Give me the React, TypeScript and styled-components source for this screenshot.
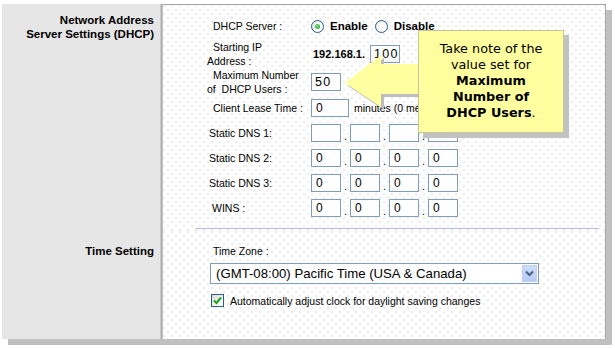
import React from "react";
import styled, { createGlobalStyle } from "styled-components";

const Global = createGlobalStyle`
  html, body { margin: 0; padding: 0; background: #ffffff; }
  body { font-family: "Liberation Sans", Arial, sans-serif; color: #000; }
  * { box-sizing: border-box; }
`;

const Page = styled.div`
  position: relative;
  width: 615px;
  height: 348px;
  padding: 4px 0 0 2px;
  overflow: hidden;
`;

const Frame = styled.div`
  width: 604px;
  display: flex;
  flex-direction: column;
  box-shadow: 6px 6px 0 #c0c0c0;
`;

const Section = styled.section<{ $h: number }>`
  display: flex;
  height: ${(p) => p.$h}px;
`;

const SideCell = styled.div<{ $pt: number }>`
  width: 158px;
  flex: none;
  background: #e6e6e6;
  text-align: right;
  padding: ${(p) => p.$pt}px 6px 0 0;
  font-weight: bold;
  font-size: 11.5px;
  line-height: 14px;
`;

const Divider = styled.div`
  width: 3px;
  flex: none;
  background: linear-gradient(to right, #d4d4d4, #a9a9a9 60%, #cfcfcf);
`;

const Body = styled.div<{ $top?: boolean; $pt: number; $pl: number }>`
  flex: 1;
  position: relative;
  display: flex;
  flex-direction: column;
  padding: ${(p) => p.$pt}px 0 0 ${(p) => p.$pl}px;
  border-right: 1px solid #a8a8a8;
  border-top: ${(p) => (p.$top ? "1px solid #a4a4a4" : "none")};
  background-color: #ffffff;
  background-image: radial-gradient(circle at 1px 1px, #ececec 0.7px, transparent 1.1px),
    radial-gradient(circle at 1px 1px, #ececec 0.7px, transparent 1.1px);
  background-size: 8px 8px, 8px 8px;
  background-position: 0 0, 4px 4px;
  font-size: 10.5px;
`;

const Row = styled.div<{ $h: number; $mt?: number }>`
  display: flex;
  align-items: center;
  height: ${(p) => p.$h}px;
  margin-top: ${(p) => p.$mt ?? 0}px;
  flex: none;
`;

const Label = styled.div`
  width: 104px;
  flex: none;
  line-height: 14px;
`;

const LabelLine = styled.span<{ $indent?: number }>`
  display: block;
  padding-left: ${(p) => p.$indent ?? 0}px;
  white-space: pre;
`;

const Controls = styled.div`
  display: flex;
  align-items: center;
  white-space: nowrap;
`;

const Radio = styled.span<{ $on?: boolean }>`
  width: 13px;
  height: 13px;
  border-radius: 50%;
  border: 1px solid #2b5d8b;
  background: radial-gradient(circle at 60% 60%, #ffffff 30%, #dcdcd4 100%);
  display: inline-flex;
  align-items: center;
  justify-content: center;
  &::after {
    content: "";
    width: 5px;
    height: 5px;
    border-radius: 50%;
    background: ${(p) => (p.$on ? "radial-gradient(circle at 40% 40%, #6ee27a, #1f9e2c)" : "transparent")};
  }
`;

const Choice = styled.span<{ $ml?: number }>`
  font-weight: bold;
  font-size: 11.5px;
  margin-left: 6px;
  margin-right: ${(p) => p.$ml ?? 0}px;
`;

const Prefix = styled.span`
  font-weight: bold;
  font-size: 11px;
  margin-left: 2px;
  margin-right: 5px;
`;

const Field = styled.input<{ $w?: number; $wide?: boolean }>`
  width: ${(p) => p.$w ?? 30}px;
  height: 18px;
  border: 1px solid #7f9db9;
  background: #ffffff;
  padding: 0 0 0 ${(p) => (p.$wide ? 3 : 4)}px;
  margin: 0;
  font-family: "Liberation Sans", Arial, sans-serif;
  font-size: ${(p) => (p.$wide ? "12.5px" : "12px")};
  letter-spacing: ${(p) => (p.$wide ? "1.3px" : "0")};
  color: #000;
  outline: none;
`;

const Dot = styled.span`
  width: 9px;
  text-align: center;
  align-self: flex-end;
  font-size: 11px;
  line-height: 12px;
`;

const Note = styled.span`
  margin-left: 5px;
  font-size: 10.5px;
  width: 64px;
  overflow: hidden;
`;

const Rule = styled.div`
  height: 1px;
  background: #b9b9e3;
  margin: 11px 6px 0 -11px;
  flex: none;
`;

const Select = styled.div`
  width: 329px;
  height: 21px;
  border: 1px solid #7f9db9;
  background: #ffffff;
  display: flex;
  align-items: center;
  justify-content: space-between;
  padding: 1px;
  margin-top: 6px;
  flex: none;
`;

const SelectText = styled.span`
  font-size: 13.2px;
  padding-left: 4px;
`;

const SelectButton = styled.span`
  width: 15px;
  height: 17px;
  background: linear-gradient(#cddcfc, #b7cbf7);
  border: 1px solid #bccff7;
  display: flex;
  align-items: center;
  justify-content: center;
`;

const CheckRow = styled.label`
  display: flex;
  align-items: center;
  margin: 10px 0 0 1px;
  font-size: 10.5px;
  flex: none;
`;

const Box = styled.span`
  width: 13px;
  height: 13px;
  border: 1px solid #2b5d8b;
  background: linear-gradient(135deg, #dcdcd4, #ffffff);
  display: inline-flex;
  align-items: center;
  justify-content: center;
  margin-right: 6px;
`;

const Callout = styled.div`
  position: absolute;
  left: 418px;
  top: 30px;
  width: 146px;
  height: 103px;
  background: #ffff9f;
  border: 1px solid #c6c69c;
  box-shadow: 5px 5px 0 #c2c2c2;
  font-family: "DejaVu Sans", Verdana, sans-serif;
  font-size: 12.8px;
  line-height: 16px;
  text-align: center;
  padding-top: 10px;
  z-index: 3;
`;

const Strong = styled.b`
  font-weight: bold;
`;

const ArrowSvg = styled.svg`
  position: absolute;
  left: 340px;
  top: 50px;
  z-index: 2;
`;

const dnsRows: { label: string; indent: number; values: string[] }[] = [
  { label: "Static DNS 1:", indent: 2, values: ["", "", "", ""] },
  { label: "Static DNS 2:", indent: 2, values: ["0", "0", "0", "0"] },
  { label: "Static DNS 3:", indent: 2, values: ["0", "0", "0", "0"] },
  { label: "WINS :", indent: 5, values: ["0", "0", "0", "0"] },
];

export default function App() {
  return (
    <Page>
      <Global />
      <Frame>
        <Section $h={227}>
          <SideCell $pt={9}>
            Network Address
            <br />
            Server Settings (DHCP)
          </SideCell>
          <Divider />
          <Body $top $pt={11} $pl={44}>
            <Row $h={20}>
              <Label>
                <LabelLine $indent={6}>DHCP Server :</LabelLine>
              </Label>
              <Controls>
                <Radio $on />
                <Choice $ml={7}>Enable</Choice>
                <Radio />
                <Choice>Disable</Choice>
              </Controls>
            </Row>
            <Row $h={28} $mt={4}>
              <Label>
                <LabelLine $indent={6}>Starting IP</LabelLine>
                <LabelLine>Address :</LabelLine>
              </Label>
              <Controls>
                <Prefix>192.168.1.</Prefix>
                <Field $wide readOnly value="100" />
              </Controls>
            </Row>
            <Row $h={28}>
              <Label>
                <LabelLine $indent={6}>Maximum Number</LabelLine>
                <LabelLine>{"of  DHCP Users :"}</LabelLine>
              </Label>
              <Controls>
                <Field $wide readOnly value="50" />
              </Controls>
            </Row>
            <Row $h={18} $mt={3}>
              <Label>
                <LabelLine $indent={6}>Client Lease Time :</LabelLine>
              </Label>
              <Controls>
                <Field $w={38} readOnly value="0" />
                <Note>minutes (0 means one day)</Note>
              </Controls>
            </Row>
            {dnsRows.map((r) => (
              <Row key={r.label} $h={18} $mt={7}>
                <Label>
                  <LabelLine $indent={r.indent}>{r.label}</LabelLine>
                </Label>
                <Controls>
                  {r.values.map((v, i) => (
                    <React.Fragment key={i}>
                      {i > 0 && <Dot>.</Dot>}
                      <Field readOnly value={v} />
                    </React.Fragment>
                  ))}
                </Controls>
              </Row>
            ))}
            <Rule />
          </Body>
        </Section>
        <Section $h={108}>
          <SideCell $pt={13}>Time Setting</SideCell>
          <Divider />
          <Body $pt={14} $pl={47}>
            <LabelLine $indent={3}>Time Zone :</LabelLine>
            <Select>
              <SelectText>(GMT-08:00) Pacific Time (USA &amp; Canada)</SelectText>
              <SelectButton>
                <svg width="9" height="7" viewBox="0 0 9 7">
                  <path d="M1 1.5 L4.5 5 L8 1.5" fill="none" stroke="#4d6185" strokeWidth="2" />
                </svg>
              </SelectButton>
            </Select>
            <CheckRow>
              <Box>
                <svg width="9" height="9" viewBox="0 0 9 9">
                  <path d="M1 4.5 L3.5 7 L8 1.5" fill="none" stroke="#21a121" strokeWidth="2" />
                </svg>
              </Box>
              Automatically adjust clock for daylight saving changes
            </CheckRow>
          </Body>
        </Section>
      </Frame>
      <ArrowSvg width="90" height="65" viewBox="0 0 90 65">
        <polygon points="8,36 44,8 44,17 83,17 83,47 44,47 44,60" fill="#bdbdbd" />
        <polygon points="5,33 41,5 41,14 80,14 80,44 41,44 41,57" fill="#ffff9f" />
      </ArrowSvg>
      <Callout>
        Take note of the
        <br />
        value set for
        <br />
        <Strong>Maximum</Strong>
        <br />
        <Strong>Number of</Strong>
        <br />
        <Strong>DHCP Users</Strong>.
      </Callout>
    </Page>
  );
}
